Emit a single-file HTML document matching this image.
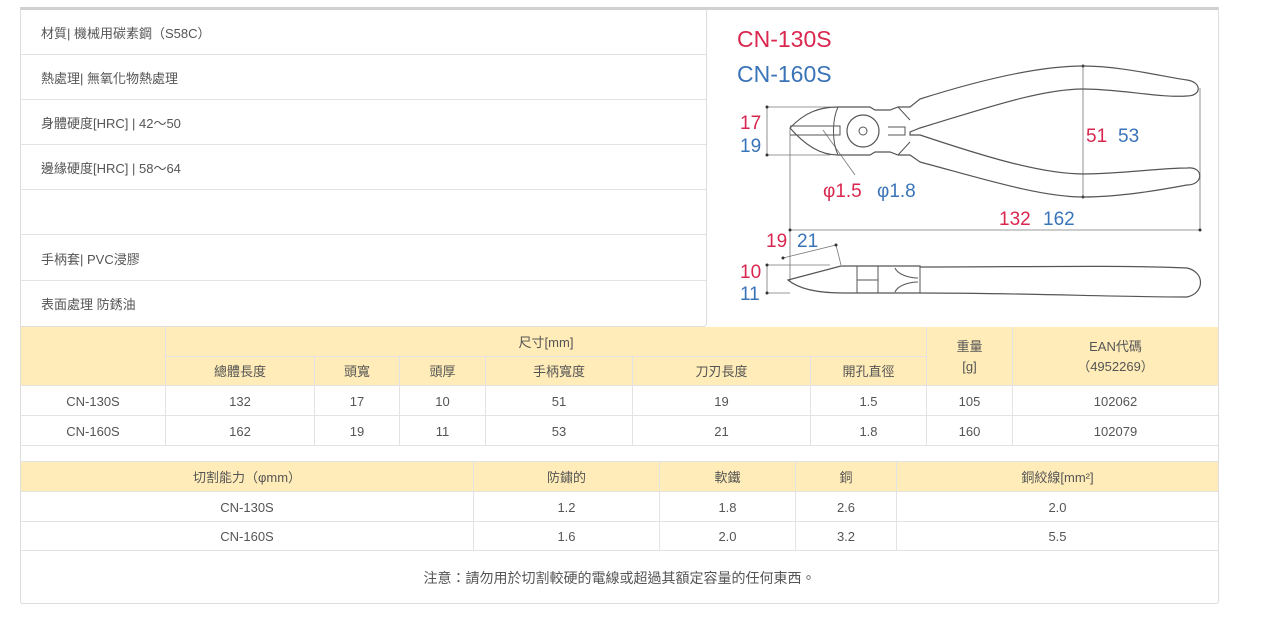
<!DOCTYPE html>
<html><head><meta charset="utf-8"><style>
*{margin:0;padding:0;box-sizing:border-box}
body{width:1270px;height:640px;background:#fff;position:relative;overflow:hidden;font-family:"Liberation Sans","Noto Sans CJK TC",sans-serif;font-size:13px;color:#555}
.a{position:absolute}
.row{position:absolute;left:21px;width:685px;height:45px;border-bottom:1px solid #e3e3e3;padding-left:20px;line-height:47px}
.c{position:absolute;text-align:center;border-right:1px solid #e3e3e3;border-bottom:1px solid #e3e3e3;display:flex;align-items:center;justify-content:center;line-height:20px;padding-top:2px}
.h{background:#ffecb8}
</style></head><body>
<div class="a" style="left:20px;top:7px;width:1199px;height:597px;border:1px solid #ddd;border-top:3px solid #d0d0d0;border-radius:0 0 3px 3px"></div>
<div class="a" style="left:20px;top:10px;width:687px;height:317px;border-right:1px solid #ddd;border-bottom:1px solid #ddd;border-radius:0 0 4px 0"></div>
<div class="row" style="top:10px">材質| 機械用碳素鋼（S58C）</div>
<div class="row" style="top:55px">熱處理| 無氧化物熱處理</div>
<div class="row" style="top:100px">身體硬度[HRC] | 42～50</div>
<div class="row" style="top:145px">邊緣硬度[HRC] | 58～64</div>
<div class="row" style="top:190px"></div>
<div class="row" style="top:236px">手柄套| PVC浸膠</div>
<div class="row" style="top:281px;border-bottom:none">表面處理 防銹油</div>

<svg class="a" style="left:720px;top:10px" width="500" height="320" viewBox="0 0 500 320" fill="none" stroke="#555" stroke-width="1">
<g font-family="Liberation Sans, sans-serif" stroke="none">
<text x="17" y="37" font-size="23" fill="#d9274f">CN-130S</text>
<text x="17" y="72" font-size="23" fill="#3a74b8">CN-160S</text>
<text x="20" y="119" font-size="19" fill="#d9274f">17</text>
<text x="20" y="142" font-size="19" fill="#3a74b8">19</text>
<text x="366" y="132" font-size="19" fill="#d9274f">51</text>
<text x="398" y="132" font-size="19" fill="#3a74b8">53</text>
<text x="103" y="187" font-size="19" fill="#d9274f">φ1.5</text>
<text x="157" y="187" font-size="19" fill="#3a74b8">φ1.8</text>
<text x="279" y="215" font-size="19" fill="#d9274f">132</text>
<text x="323" y="215" font-size="19" fill="#3a74b8">162</text>
<text x="46" y="237" font-size="19" fill="#d9274f">19</text>
<text x="77" y="237" font-size="19" fill="#3a74b8">21</text>
<text x="20" y="268" font-size="19" fill="#d9274f">10</text>
<text x="20" y="290" font-size="19" fill="#3a74b8">11</text>
</g>
<g stroke="#777" stroke-width="0.8">
<path d="M47 97V145M47 97H110M47 145H110M363 56V187M70 118V272M480 78V220M70 220H480M63 248L116 235L121 255M47 255V283M47 255H110M47 283H70M135 165L103 120"/>
</g>
<g fill="#333" stroke="none">
<circle cx="47" cy="97" r="1.5"/><circle cx="47" cy="145" r="1.5"/><circle cx="363" cy="56" r="1.5"/><circle cx="363" cy="187" r="1.5"/><circle cx="70" cy="220" r="1.5"/><circle cx="480" cy="220" r="1.5"/><circle cx="63" cy="248" r="1.5"/><circle cx="116" cy="235" r="1.5"/><circle cx="47" cy="255" r="1.5"/><circle cx="47" cy="283" r="1.5"/>
</g>
<path stroke-width="1.2" d="M70 118C85 102 100 97 118 97H150L155 100H170L178 97H190L200 89C260 70 320 56 363 56C400 56 440 66 467 70C482 72 482 86 467 86C440 88 400 79 363 79C320 79 260 100 200 118L190 122V125L200 125C260 145 320 164 363 164C400 164 440 158 467 158C484 156 484 175 467 175C440 180 400 187 363 187C320 187 260 168 200 152L190 145H178L170 142H155L150 145H118C100 145 85 135 70 118Z"/>
<circle cx="143" cy="121" r="16" stroke-width="1.2"/><circle cx="143" cy="121" r="4"/>
<path d="M70 116H120V125H70M118 97C112 110 112 132 118 145M168 117H185V125H168M178 97L190 110M178 145L190 132"/>
<path stroke-width="1.2" d="M68 270L121 256H200V257C300 257 400 255 467 258C485 262 485 283 467 287C400 287 300 283 200 283H123C100 283 80 280 68 270Z"/>
<path d="M137 256V283M158 256V283M137 270H158M200 257V283M175 258C178 265 190 268 198 268M175 282C178 275 190 272 198 272"/>
</svg>

<div class="c h" style="left:21px;top:327px;width:145px;height:59px"></div>
<div class="c h" style="left:166px;top:327px;width:761px;height:30px">尺寸[mm]</div>
<div class="c h" style="left:166px;top:357px;width:149px;height:29px">總體長度</div>
<div class="c h" style="left:315px;top:357px;width:85px;height:29px">頭寬</div>
<div class="c h" style="left:400px;top:357px;width:86px;height:29px">頭厚</div>
<div class="c h" style="left:486px;top:357px;width:147px;height:29px">手柄寬度</div>
<div class="c h" style="left:633px;top:357px;width:178px;height:29px">刀刃長度</div>
<div class="c h" style="left:811px;top:357px;width:116px;height:29px">開孔直徑</div>
<div class="c h" style="left:927px;top:327px;width:86px;height:59px">重量<br>[g]</div>
<div class="c h" style="left:1013px;top:327px;width:205px;height:59px;border-right:none">EAN代碼<br>（4952269）</div>
<div class="c" style="left:21px;top:386px;width:145px;height:30px">CN-130S</div>
<div class="c" style="left:166px;top:386px;width:149px;height:30px">132</div>
<div class="c" style="left:315px;top:386px;width:85px;height:30px">17</div>
<div class="c" style="left:400px;top:386px;width:86px;height:30px">10</div>
<div class="c" style="left:486px;top:386px;width:147px;height:30px">51</div>
<div class="c" style="left:633px;top:386px;width:178px;height:30px">19</div>
<div class="c" style="left:811px;top:386px;width:116px;height:30px">1.5</div>
<div class="c" style="left:927px;top:386px;width:86px;height:30px">105</div>
<div class="c" style="left:1013px;top:386px;width:205px;height:30px;border-right:none">102062</div>
<div class="c" style="left:21px;top:416px;width:145px;height:30px">CN-160S</div>
<div class="c" style="left:166px;top:416px;width:149px;height:30px">162</div>
<div class="c" style="left:315px;top:416px;width:85px;height:30px">19</div>
<div class="c" style="left:400px;top:416px;width:86px;height:30px">11</div>
<div class="c" style="left:486px;top:416px;width:147px;height:30px">53</div>
<div class="c" style="left:633px;top:416px;width:178px;height:30px">21</div>
<div class="c" style="left:811px;top:416px;width:116px;height:30px">1.8</div>
<div class="c" style="left:927px;top:416px;width:86px;height:30px">160</div>
<div class="c" style="left:1013px;top:416px;width:205px;height:30px;border-right:none">102079</div>

<div class="a" style="left:21px;top:461px;width:1197px;border-top:1px solid #e3e3e3"></div>
<div class="c h" style="left:21px;top:462px;width:453px;height:30px">切割能力（φmm）</div>
<div class="c h" style="left:474px;top:462px;width:186px;height:30px">防鏽的</div>
<div class="c h" style="left:660px;top:462px;width:136px;height:30px">軟鐵</div>
<div class="c h" style="left:796px;top:462px;width:101px;height:30px">銅</div>
<div class="c h" style="left:897px;top:462px;width:321px;height:30px;border-right:none">銅絞線[mm²]</div>
<div class="c" style="left:21px;top:492px;width:453px;height:30px">CN-130S</div>
<div class="c" style="left:474px;top:492px;width:186px;height:30px">1.2</div>
<div class="c" style="left:660px;top:492px;width:136px;height:30px">1.8</div>
<div class="c" style="left:796px;top:492px;width:101px;height:30px">2.6</div>
<div class="c" style="left:897px;top:492px;width:321px;height:30px;border-right:none">2.0</div>
<div class="c" style="left:21px;top:522px;width:453px;height:29px">CN-160S</div>
<div class="c" style="left:474px;top:522px;width:186px;height:29px">1.6</div>
<div class="c" style="left:660px;top:522px;width:136px;height:29px">2.0</div>
<div class="c" style="left:796px;top:522px;width:101px;height:29px">3.2</div>
<div class="c" style="left:897px;top:522px;width:321px;height:29px;border-right:none">5.5</div>
<div class="a" style="left:21px;top:568px;width:1197px;text-align:center;line-height:20px;font-size:14px">注意：請勿用於切割較硬的電線或超過其額定容量的任何東西。</div>
</body></html>
